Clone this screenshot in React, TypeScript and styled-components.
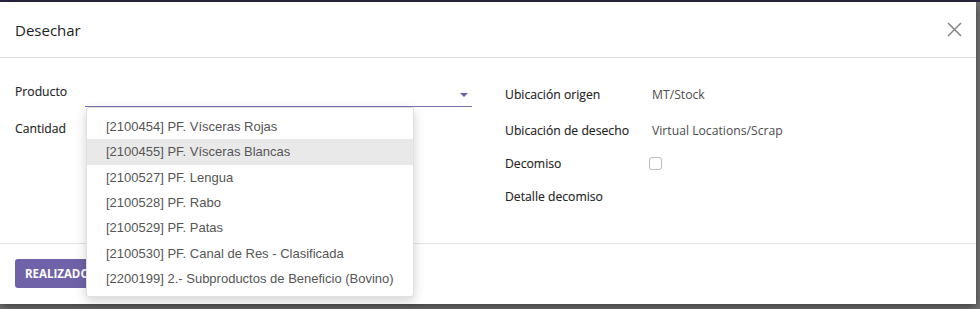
import styled, { createGlobalStyle } from 'styled-components'

const GlobalStyle = createGlobalStyle`
  html, body {
    margin: 0;
    padding: 0;
    overflow: hidden;
  }
  body {
    font-family: 'Open Sans', 'Noto Sans', sans-serif;
    background-color: #767676;
  }
`

const Backdrop = styled.div`
  background-color: #767676;
  border-top: 2px solid #2b2540;
  box-sizing: border-box;
  height: 309px;
  padding: 0 4px 5px 0;
  display: flex;
`

const Modal = styled.div`
  background-color: white;
  box-shadow: 0 3px 9px rgba(0, 0, 0, 0.5);
  display: flex;
  flex-direction: column;
  flex-grow: 1;
`

const Header = styled.div`
  align-items: center;
  border-bottom: 1px solid #e2e2e2;
  display: flex;
  height: 55px;
  justify-content: space-between;
  padding: 0 14px 0 15px;
`

const Title = styled.h4`
  color: #222;
  font-size: 15px;
  font-weight: 400;
  margin: 0;
`

const CloseButton = styled.button`
  background: none;
  border: none;
  cursor: pointer;
  display: flex;
  padding: 0;
`

const Body = styled.div`
  display: grid;
  flex-grow: 1;
  gap: 33px;
  grid-template-columns: 457px 1fr;
  padding: 18px 15px 0;
`

const Column = styled.div`
  display: flex;
  flex-direction: column;
`

const Row = styled.div<{ $height: number }>`
  align-items: center;
  display: flex;
  height: ${p => p.$height}px;
`

const Label = styled.span<{ $width: number }>`
  color: #222;
  flex-shrink: 0;
  font-size: 12.2px;
  font-weight: 400;
  -webkit-text-stroke: 0.12px #222;
  width: ${p => p.$width}px;
`

const Value = styled.span`
  color: #4c4c4c;
  font-size: 12.2px;
`

const SelectBox = styled.div`
  align-self: stretch;
  border-bottom: 1px solid #7c6fae;
  flex-grow: 1;
  position: relative;
`

const Caret = styled.span`
  border-left: 4px solid transparent;
  border-right: 4px solid transparent;
  border-top: 4px solid #6f60a6;
  position: absolute;
  right: 4px;
  top: 17px;
`

const Dropdown = styled.ul`
  background-color: white;
  border: 1px solid rgba(0, 0, 0, 0.12);
  border-radius: 3px;
  box-shadow: 0 4px 12px rgba(0, 0, 0, 0.18);
  box-sizing: border-box;
  left: 1px;
  list-style: none;
  margin: 0;
  padding: 6px 0 5px;
  position: absolute;
  top: calc(100% + 1px);
  width: 328px;
  z-index: 10;
`

const Option = styled.li<{ $active?: boolean }>`
  background-color: ${p => (p.$active ? '#e9e9e9' : 'transparent')};
  color: #555;
  font-family: 'Liberation Sans', Arial, sans-serif;
  font-size: 13px;
  height: 25.35px;
  line-height: 25.35px;
  padding-left: 19px;
  white-space: nowrap;
`

const Checkbox = styled.span`
  border: 1px solid #bcbcbc;
  border-radius: 3px;
  box-sizing: border-box;
  display: inline-block;
  height: 13px;
  margin-left: -3px;
  width: 13px;
`

const Footer = styled.div`
  align-items: center;
  border-top: 1px solid #e2e2e2;
  display: flex;
  height: 60px;
  padding: 0 15px;
`

const PrimaryButton = styled.button`
  background-color: #7062a8;
  border: none;
  border-radius: 3px;
  color: white;
  font-family: 'Open Sans', sans-serif;
  font-size: 11.5px;
  font-weight: 700;
  height: 29px;
  margin-top: -2px;
  padding: 0 10px;
`

const products = [
  '[2100454] PF. Vísceras Rojas',
  '[2100455] PF. Vísceras Blancas',
  '[2100527] PF. Lengua',
  '[2100528] PF. Rabo',
  '[2100529] PF. Patas',
  '[2100530] PF. Canal de Res - Clasificada',
  '[2200199] 2.- Subproductos de Beneficio (Bovino)',
]

const rightFields = [
  { label: 'Ubicación origen', value: 'MT/Stock', height: 37 },
  { label: 'Ubicación de desecho', value: 'Virtual Locations/Scrap', height: 34 },
  { label: 'Decomiso', checkbox: true, height: 33 },
  { label: 'Detalle decomiso', height: 32 },
]

export default function App() {
  return (
    <>
      <GlobalStyle />
      <Backdrop>
        <Modal>
          <Header>
            <Title>Desechar</Title>
            <CloseButton aria-label="Cerrar">
              <svg width="15" height="15" viewBox="0 0 15 15">
                <path d="M1 1L14 14M14 1L1 14" stroke="#858585" strokeWidth="1.5" />
              </svg>
            </CloseButton>
          </Header>

          <Body>
            <Column>
              <Row $height={31}>
                <Label $width={70}>Producto</Label>
                <SelectBox>
                  <Caret />
                  <Dropdown>
                    {products.map((p, i) => (
                      <Option key={p} $active={i === 1}>
                        {p}
                      </Option>
                    ))}
                  </Dropdown>
                </SelectBox>
              </Row>
              <Row $height={42}>
                <Label $width={70}>Cantidad</Label>
              </Row>
            </Column>

            <Column>
              {rightFields.map(f => (
                <Row key={f.label} $height={f.height}>
                  <Label $width={147}>{f.label}</Label>
                  {f.value && <Value>{f.value}</Value>}
                  {f.checkbox && <Checkbox />}
                </Row>
              ))}
            </Column>
          </Body>

          <Footer>
            <PrimaryButton>REALIZADO</PrimaryButton>
          </Footer>
        </Modal>
      </Backdrop>
    </>
  )
}
